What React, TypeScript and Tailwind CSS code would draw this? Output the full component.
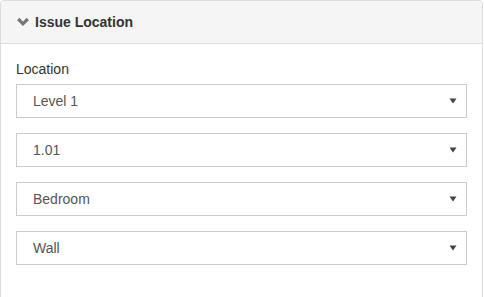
import React from "react";

const Caret = () => (
  <svg width="8" height="6" viewBox="0 0 8 6" className="shrink-0">
    <path d="M0.5 0.5 H7.5 L4 5.5 Z" fill="#444" />
  </svg>
);

const Select = ({ value, last }: { value: string; last?: boolean }) => (
  <div
    className={`flex h-[34px] items-center justify-between border border-[#ccc] bg-white pl-[16px] pr-[9px] text-[14px] text-[#555] ${last ? "" : "mb-[15px]"}`}
  >
    <span>{value}</span>
    <Caret />
  </div>
);

export default function App() {
  return (
    <div className="h-[297px] w-[484px] bg-white" style={{ fontFamily: '"Liberation Sans", Arial, sans-serif' }}>
      <div className="w-[483px] overflow-hidden rounded-[4px] border border-[#ddd] bg-white shadow-[0_1px_1px_rgba(0,0,0,0.05)]">
        <div className="flex h-[43px] items-center gap-[5px] border-b border-[#ddd] bg-[#f5f5f5] pl-[15px]">
          <svg width="14" height="10" viewBox="0 0 14 10">
            <polyline points="2.2,2 7,6.8 11.8,2" fill="none" stroke="#777" strokeWidth="3.2" strokeLinejoin="miter" />
          </svg>
          <span className="text-[14px] font-bold leading-[20px] text-[#333]">Issue Location</span>
        </div>
        <div className="p-[15px]">
          <div className="mb-[5px] text-[14px] leading-[20px] text-[#333]">Location</div>
          <Select value="Level 1" />
          <Select value="1.01" />
          <Select value="Bedroom" />
          <Select value="Wall" />
          <div className="h-[15px]" />
        </div>
      </div>
    </div>
  );
}
